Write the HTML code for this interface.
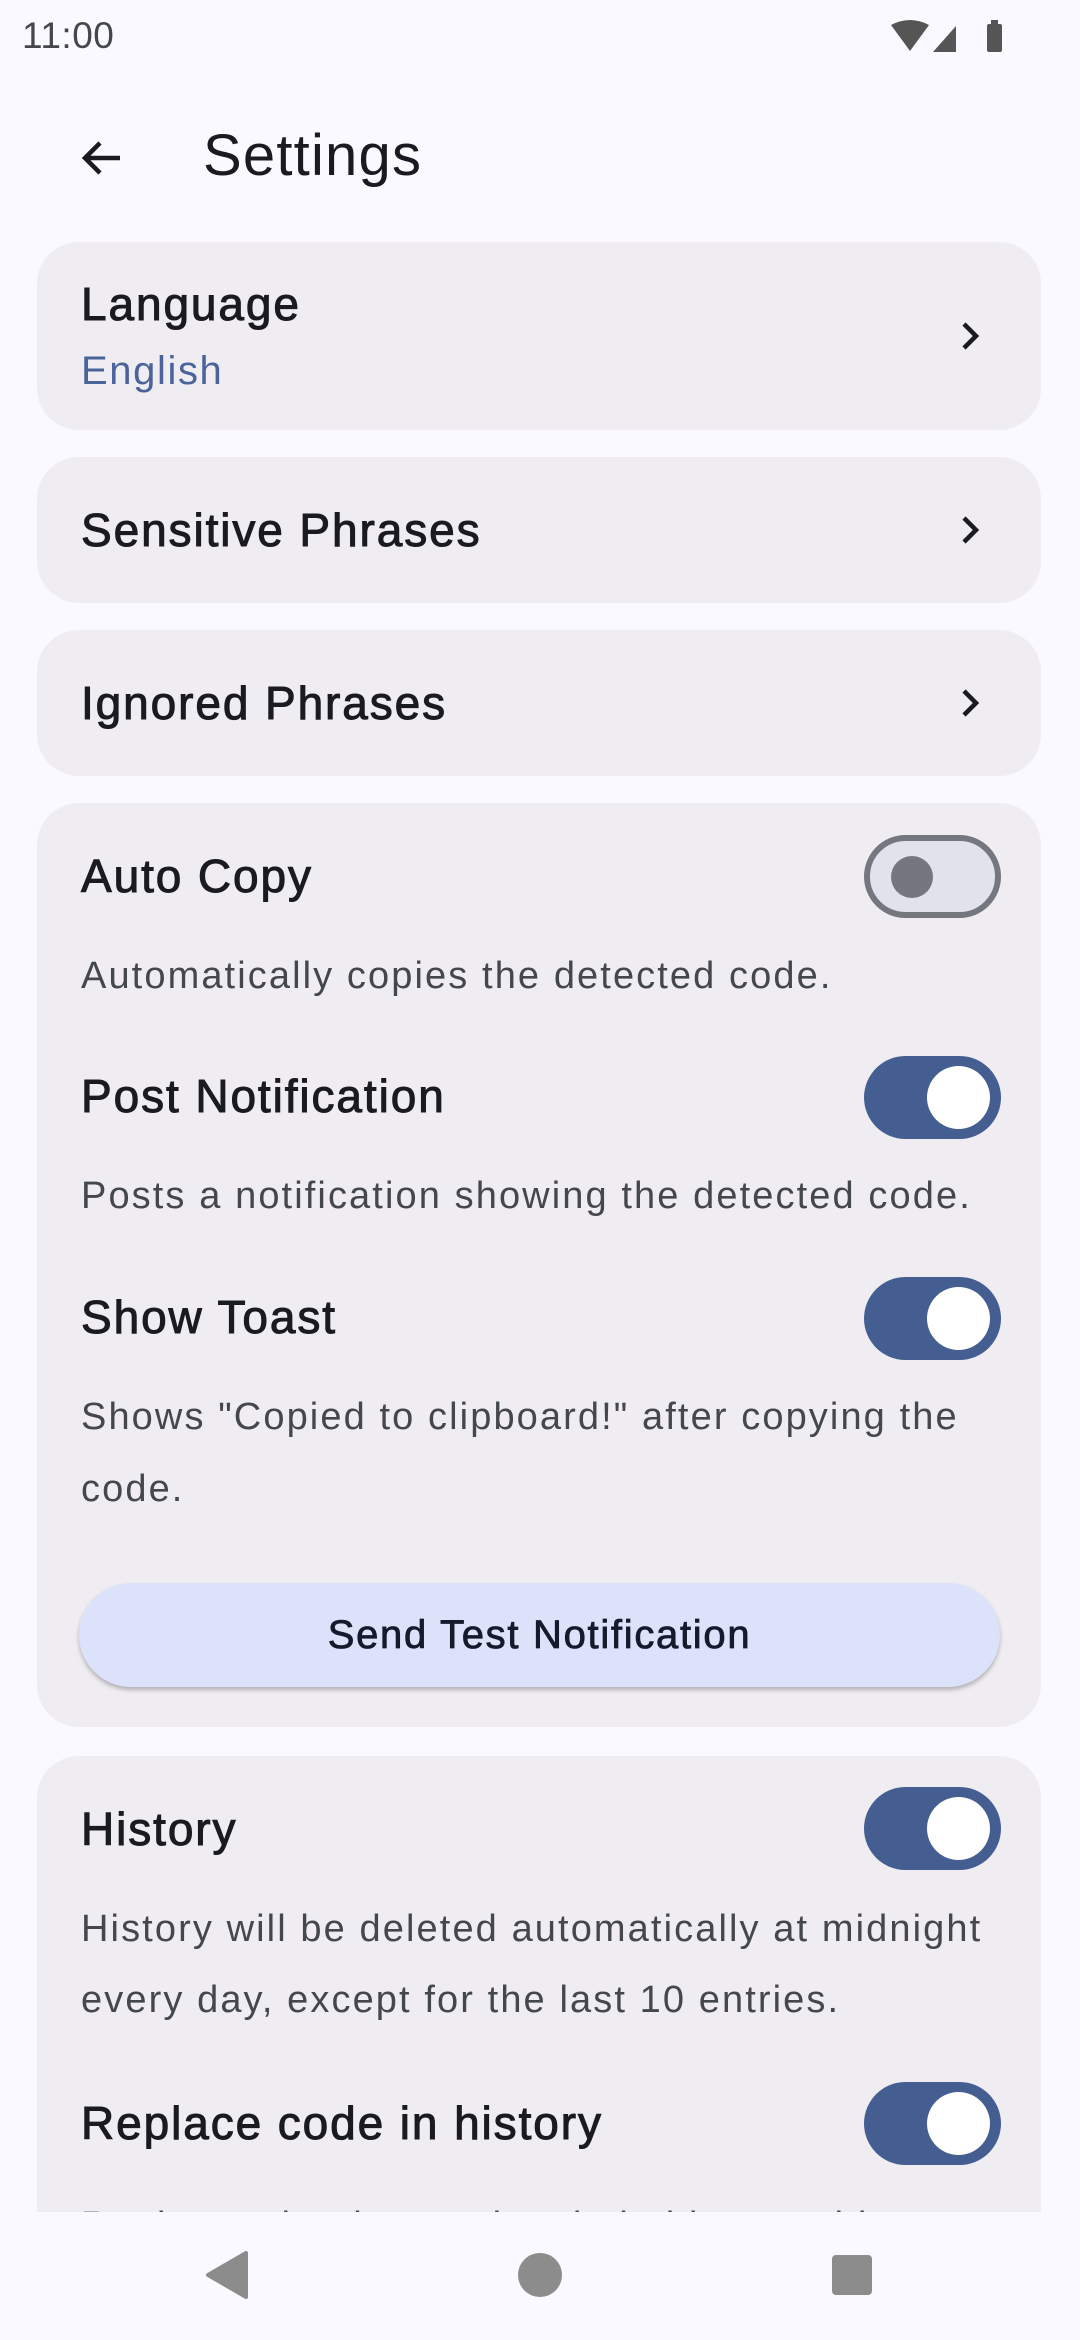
<!DOCTYPE html>
<html><head><meta charset="utf-8"><style>
*{margin:0;padding:0;box-sizing:border-box}
body{width:1080px;height:2340px;background:#f9f9ff;font-family:"Liberation Sans",sans-serif;position:relative;overflow:hidden;color:#1a1b20}
.a{position:absolute;white-space:nowrap}
.card{position:absolute;left:37px;width:1004px;background:#efedf2;border-radius:42px}
.t{position:absolute;left:81px;font-size:46px;line-height:60px;color:#1a1b20;-webkit-text-stroke:1px #1a1b20;letter-spacing:1.9px;white-space:nowrap}
.d{position:absolute;left:81px;font-size:38px;line-height:72px;color:#45474e;letter-spacing:2.1px;white-space:nowrap}
.chev{position:absolute;left:955px;width:30px;height:40px}
.sw{position:absolute;left:864px;width:137px;height:83px;border-radius:42px;background:#445e91}
.sw::after{content:"";position:absolute;left:63px;top:10px;width:63px;height:63px;border-radius:50%;background:#fff}
.off{background:#e1e2ec;border:6px solid #75777f}
.off::after{left:21px;top:15px;width:42px;height:42px;background:#75777f}
</style></head><body>
<div class="a" style="left:22px;top:15px;font-size:37px;color:#45474e;letter-spacing:0.5px">11:00</div>
<svg class="a" style="left:890px;top:18px" width="120" height="38" viewBox="0 0 120 38">
<path d="M1 7 Q20 -3 39 7 L20 33 Z" fill="#555"/>
<path d="M43 34 L66 8 L66 34 Z" fill="#555"/>
<rect x="97" y="6" width="15" height="28" rx="2" fill="#555"/><rect x="101" y="2" width="7" height="5" fill="#555"/>
</svg>
<svg class="a" style="left:78px;top:134px" width="48" height="48" viewBox="0 0 48 48"><path d="M42 24H8M22 9L7 24L22 39" stroke="#1a1b20" stroke-width="4.5" fill="none"/></svg>
<div class="a" style="left:203px;top:118px;font-size:58px;line-height:76px;color:#1a1b20;letter-spacing:1.2px">Settings</div>

<div class="card" style="top:242px;height:188px"></div>
<div class="t" style="top:274px">Language</div>
<div class="a" style="left:81px;top:345px;font-size:40px;line-height:52px;color:#4a639a;letter-spacing:1.6px">English</div>
<svg class="chev" style="top:316px" viewBox="0 0 30 40"><path d="M9 8L21 20L9 32" stroke="#1a1b20" stroke-width="4.5" fill="none"/></svg>

<div class="card" style="top:457px;height:146px"></div>
<div class="t" style="top:500px">Sensitive Phrases</div>
<svg class="chev" style="top:510px" viewBox="0 0 30 40"><path d="M9 8L21 20L9 32" stroke="#1a1b20" stroke-width="4.5" fill="none"/></svg>

<div class="card" style="top:630px;height:146px"></div>
<div class="t" style="top:673px">Ignored Phrases</div>
<svg class="chev" style="top:683px" viewBox="0 0 30 40"><path d="M9 8L21 20L9 32" stroke="#1a1b20" stroke-width="4.5" fill="none"/></svg>

<div class="card" style="top:803px;height:924px"></div>
<div class="t" style="top:846px">Auto Copy</div>
<div class="sw off" style="top:835px"></div>
<div class="d" style="top:940px">Automatically copies the detected code.</div>
<div class="t" style="top:1066px">Post Notification</div>
<div class="sw" style="top:1056px"></div>
<div class="d" style="top:1160px">Posts a notification showing the detected code.</div>
<div class="t" style="top:1287px">Show Toast</div>
<div class="sw" style="top:1277px"></div>
<div class="d" style="top:1381px">Shows "Copied to clipboard!" after copying the</div>
<div class="d" style="top:1453px">code.</div>
<div class="a" style="left:79px;top:1583px;width:921px;height:104px;border-radius:52px;background:#dce2f9;box-shadow:0 3px 4px rgba(0,0,0,0.25);text-align:center;font-size:40px;line-height:104px;color:#141b2c;-webkit-text-stroke:0.8px #141b2c;letter-spacing:1.7px">Send Test Notification</div>

<div class="card" style="top:1756px;height:456px;border-radius:42px 42px 0 0"></div>
<div class="t" style="top:1799px">History</div>
<div class="sw" style="top:1787px"></div>
<div class="d" style="top:1893px">History will be deleted automatically at midnight</div>
<div class="d" style="top:1964px">every day, except for the last 10 entries.</div>
<div class="t" style="top:2093px">Replace code in history</div>
<div class="sw" style="top:2082px"></div>
<div class="d" style="top:2190px">Replaces the detected code in history with</div>
<div style="position:absolute;left:0;top:2212px;width:1080px;height:128px;background:#f9f9ff"></div>

<svg class="a" style="left:200px;top:2245px" width="700" height="60" viewBox="0 0 700 60">
<path d="M46 8 L46 52 L8 30 Z" fill="#8c8c8c" stroke="#8c8c8c" stroke-width="4" stroke-linejoin="round"/>
<circle cx="340" cy="30" r="22" fill="#8c8c8c"/>
<rect x="632" y="10" width="40" height="40" rx="4" fill="#8c8c8c"/>
</svg>
</body></html>
